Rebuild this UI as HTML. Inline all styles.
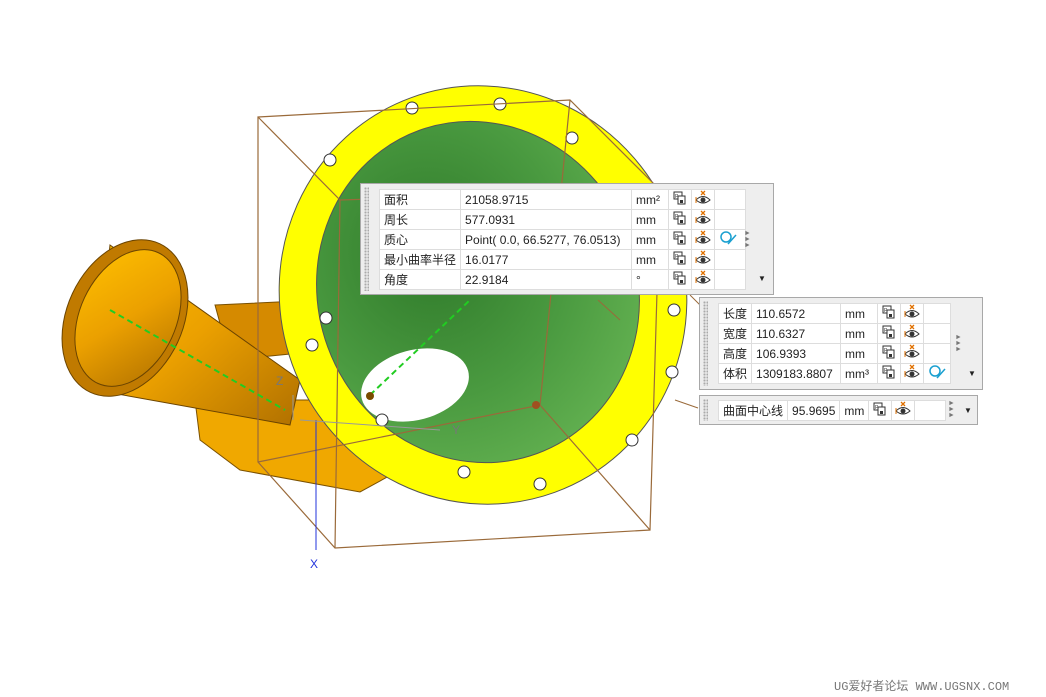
<!DOCTYPE html>
<html><head><meta charset="utf-8"><style>
body{margin:0;width:1046px;height:697px;background:#fff;position:relative;overflow:hidden;font-family:"Liberation Sans","Noto Sans CJK SC",sans-serif;font-size:12px;color:#222}
.p{position:absolute;background:#eeeeee;border:1px solid #a8a8a8}
.p .g{position:absolute;left:3px;top:3px;bottom:3px;width:5px;background-image:radial-gradient(#aaa 1px,transparent 1.2px);background-size:3px 3px}
table{position:absolute;border-collapse:collapse;background:#fff}
td{border:1px solid #ddd;height:19px;padding:0 4px;white-space:nowrap}
td.i{padding:0 3px;text-align:center;width:16px}
.ar{position:absolute;color:#777;font-size:7px;line-height:6px}
.dd{position:absolute;font-size:8px;color:#222}
</style></head><body>
<svg width="0" height="0" style="position:absolute">
<defs>
<symbol id="cb" viewBox="0 0 14 14"><rect x="1" y="1" width="8" height="7" fill="#fff" stroke="#333"/><text x="2" y="7" font-size="5" fill="#333">P</text><rect x="5" y="5" width="7" height="8" fill="#fff" stroke="#333"/><rect x="7" y="9" width="3" height="3" fill="#333"/></symbol>
<symbol id="ey" viewBox="0 0 16 16"><path d="M6 1l4 4M10 1l-4 4" stroke="#e07000" stroke-width="1.3"/><path d="M1 10 Q8 3 15 10 Q8 16 1 10Z" fill="#fff" stroke="#333"/><circle cx="8" cy="10" r="2.5" fill="#333"/><path d="M1 7v6" stroke="#e07000"/></symbol>
<symbol id="cl" viewBox="0 0 18 16"><circle cx="7" cy="7" r="5" fill="none" stroke="#1aa0d0" stroke-width="1.5"/><path d="M9 14 L17 5" stroke="#1aa0d0" stroke-width="1.5"/></symbol>
</defs></svg>
<svg width="1046" height="697" style="position:absolute;left:0;top:0">
<defs>
<linearGradient id="cone" x1="0" y1="0" x2="1" y2="1"><stop offset="0" stop-color="#ffc000"/><stop offset=".5" stop-color="#eba000"/><stop offset="1" stop-color="#b07000"/></linearGradient>
<radialGradient id="grn" cx=".4" cy=".35" r=".7"><stop offset="0" stop-color="#2f7a2a"/><stop offset=".6" stop-color="#4a9a40"/><stop offset="1" stop-color="#62b050"/></radialGradient>
</defs>
<path d="M195 400 L390 400 L400 470 L360 492 L240 470 L200 440 Z" fill="#f0a800" stroke="#7a5000"/>
<path d="M215 305 L320 300 L330 350 L230 360 Z" fill="#d58a00" stroke="#7a5000"/>
<path d="M110 245 L300 380 L290 425 L95 390 Z" fill="url(#cone)" stroke="#6b4400"/>
<ellipse cx="125" cy="318" rx="58" ry="82" transform="rotate(25 125 318)" fill="#c07a00" stroke="#6b4400"/>
<ellipse cx="128" cy="318" rx="48" ry="72" transform="rotate(25 128 318)" fill="url(#cone)" stroke="#6b4400"/>
<ellipse cx="483" cy="295" rx="203" ry="210" transform="rotate(-20 483 295)" fill="#ffff00" stroke="#555"/>
<ellipse cx="478" cy="292" rx="160" ry="172" transform="rotate(-20 478 292)" fill="url(#grn)" stroke="#555"/>
<ellipse cx="415" cy="385" rx="55" ry="35" transform="rotate(-15 415 385)" fill="#fff"/>
<g fill="#fff" stroke="#333">
<circle cx="330" cy="160" r="6"/><circle cx="412" cy="108" r="6"/><circle cx="500" cy="104" r="6"/><circle cx="572" cy="138" r="6"/><circle cx="674" cy="310" r="6"/><circle cx="672" cy="372" r="6"/><circle cx="632" cy="440" r="6"/><circle cx="540" cy="484" r="6"/><circle cx="464" cy="472" r="6"/><circle cx="382" cy="420" r="6"/><circle cx="312" cy="345" r="6"/><circle cx="326" cy="318" r="6"/>
</g>
<g stroke="#9a6a3a" fill="none" stroke-width="1.2">
<path d="M258 117 L570 100 L660 190 L650 530 L335 548 L258 462 Z"/>
<path d="M258 117 L340 200 L335 548 M340 200 L660 190 M258 462 L540 405 L650 530 M540 405 L570 100"/>
</g>
<path d="M110 310 L285 410" stroke="#22cc22" stroke-width="2" stroke-dasharray="6 4"/>
<path d="M370 395 L470 300" stroke="#22cc22" stroke-width="2" stroke-dasharray="6 4"/>
<circle cx="370" cy="396" r="4" fill="#7a4b00"/><circle cx="536" cy="405" r="4" fill="#a05020"/>
<path d="M316 420 L316 550" stroke="#2233dd"/><text x="310" y="568" fill="#2233dd" font-size="12">X</text>
<path d="M300 420 L440 430" stroke="#999"/><text x="452" y="434" fill="#777" font-size="12">Y</text>
<path d="M293 395 L293 420" stroke="#999"/><text x="276" y="385" fill="#777" font-size="12">Z</text>
<path d="M690 295 L700 305 M598 300 L620 320 M675 400 L698 408" stroke="#9a6a3a"/>
<text x="834" y="690" fill="#777" font-size="12" font-family="Liberation Mono,Noto Sans CJK SC,monospace">UG爱好者论坛 WWW.UGSNX.COM</text>
</svg>

<div class="p" style="left:360px;top:183px;width:412px;height:110px"><div class="g"></div>
<table style="left:18px;top:5px">
<tr><td style="width:72px">面积</td><td style="width:162px">21058.9715</td><td style="width:28px">mm²</td><td class="i"><svg class="ic" width="14" height="14"><use href="#cb"/></svg></td><td class="i"><svg width="16" height="16"><use href="#ey"/></svg></td><td style="width:22px"></td></tr>
<tr><td>周长</td><td>577.0931</td><td>mm</td><td class="i"><svg width="14" height="14"><use href="#cb"/></svg></td><td class="i"><svg width="16" height="16"><use href="#ey"/></svg></td><td></td></tr>
<tr><td>质心</td><td>Point( 0.0, 66.5277, 76.0513)</td><td>mm</td><td class="i"><svg width="14" height="14"><use href="#cb"/></svg></td><td class="i"><svg width="16" height="16"><use href="#ey"/></svg></td><td><svg width="18" height="16"><use href="#cl"/></svg></td></tr>
<tr><td>最小曲率半径</td><td>16.0177</td><td>mm</td><td class="i"><svg width="14" height="14"><use href="#cb"/></svg></td><td class="i"><svg width="16" height="16"><use href="#ey"/></svg></td><td></td></tr>
<tr><td>角度</td><td>22.9184</td><td>°</td><td class="i"><svg width="14" height="14"><use href="#cb"/></svg></td><td class="i"><svg width="16" height="16"><use href="#ey"/></svg></td><td></td></tr>
</table><div class="ar" style="left:383px;top:47px">►<br>►<br>►</div><div class="dd" style="left:397px;top:90px">▼</div></div>

<div class="p" style="left:699px;top:297px;width:282px;height:91px"><div class="g"></div>
<table style="left:18px;top:5px">
<tr><td style="width:24px">长度</td><td style="width:80px">110.6572</td><td style="width:28px">mm</td><td class="i"><svg width="14" height="14"><use href="#cb"/></svg></td><td class="i"><svg width="16" height="16"><use href="#ey"/></svg></td><td style="width:18px"></td></tr>
<tr><td>宽度</td><td>110.6327</td><td>mm</td><td class="i"><svg width="14" height="14"><use href="#cb"/></svg></td><td class="i"><svg width="16" height="16"><use href="#ey"/></svg></td><td></td></tr>
<tr><td>高度</td><td>106.9393</td><td>mm</td><td class="i"><svg width="14" height="14"><use href="#cb"/></svg></td><td class="i"><svg width="16" height="16"><use href="#ey"/></svg></td><td></td></tr>
<tr><td>体积</td><td>1309183.8807</td><td>mm³</td><td class="i"><svg width="14" height="14"><use href="#cb"/></svg></td><td class="i"><svg width="16" height="16"><use href="#ey"/></svg></td><td><svg width="18" height="16"><use href="#cl"/></svg></td></tr>
</table><div class="ar" style="left:255px;top:37px">►<br>►<br>►</div><div class="dd" style="left:268px;top:71px">▼</div></div>

<div class="p" style="left:699px;top:395px;width:277px;height:28px"><div class="g"></div>
<table style="left:18px;top:4px">
<tr><td>曲面中心线</td><td>95.9695</td><td>mm</td><td class="i"><svg width="14" height="14"><use href="#cb"/></svg></td><td class="i"><svg width="16" height="16"><use href="#ey"/></svg></td><td style="width:22px"></td></tr>
</table><div class="ar" style="left:248px;top:5px">►<br>►<br>►</div><div class="dd" style="left:264px;top:10px">▼</div></div>
</body></html>
